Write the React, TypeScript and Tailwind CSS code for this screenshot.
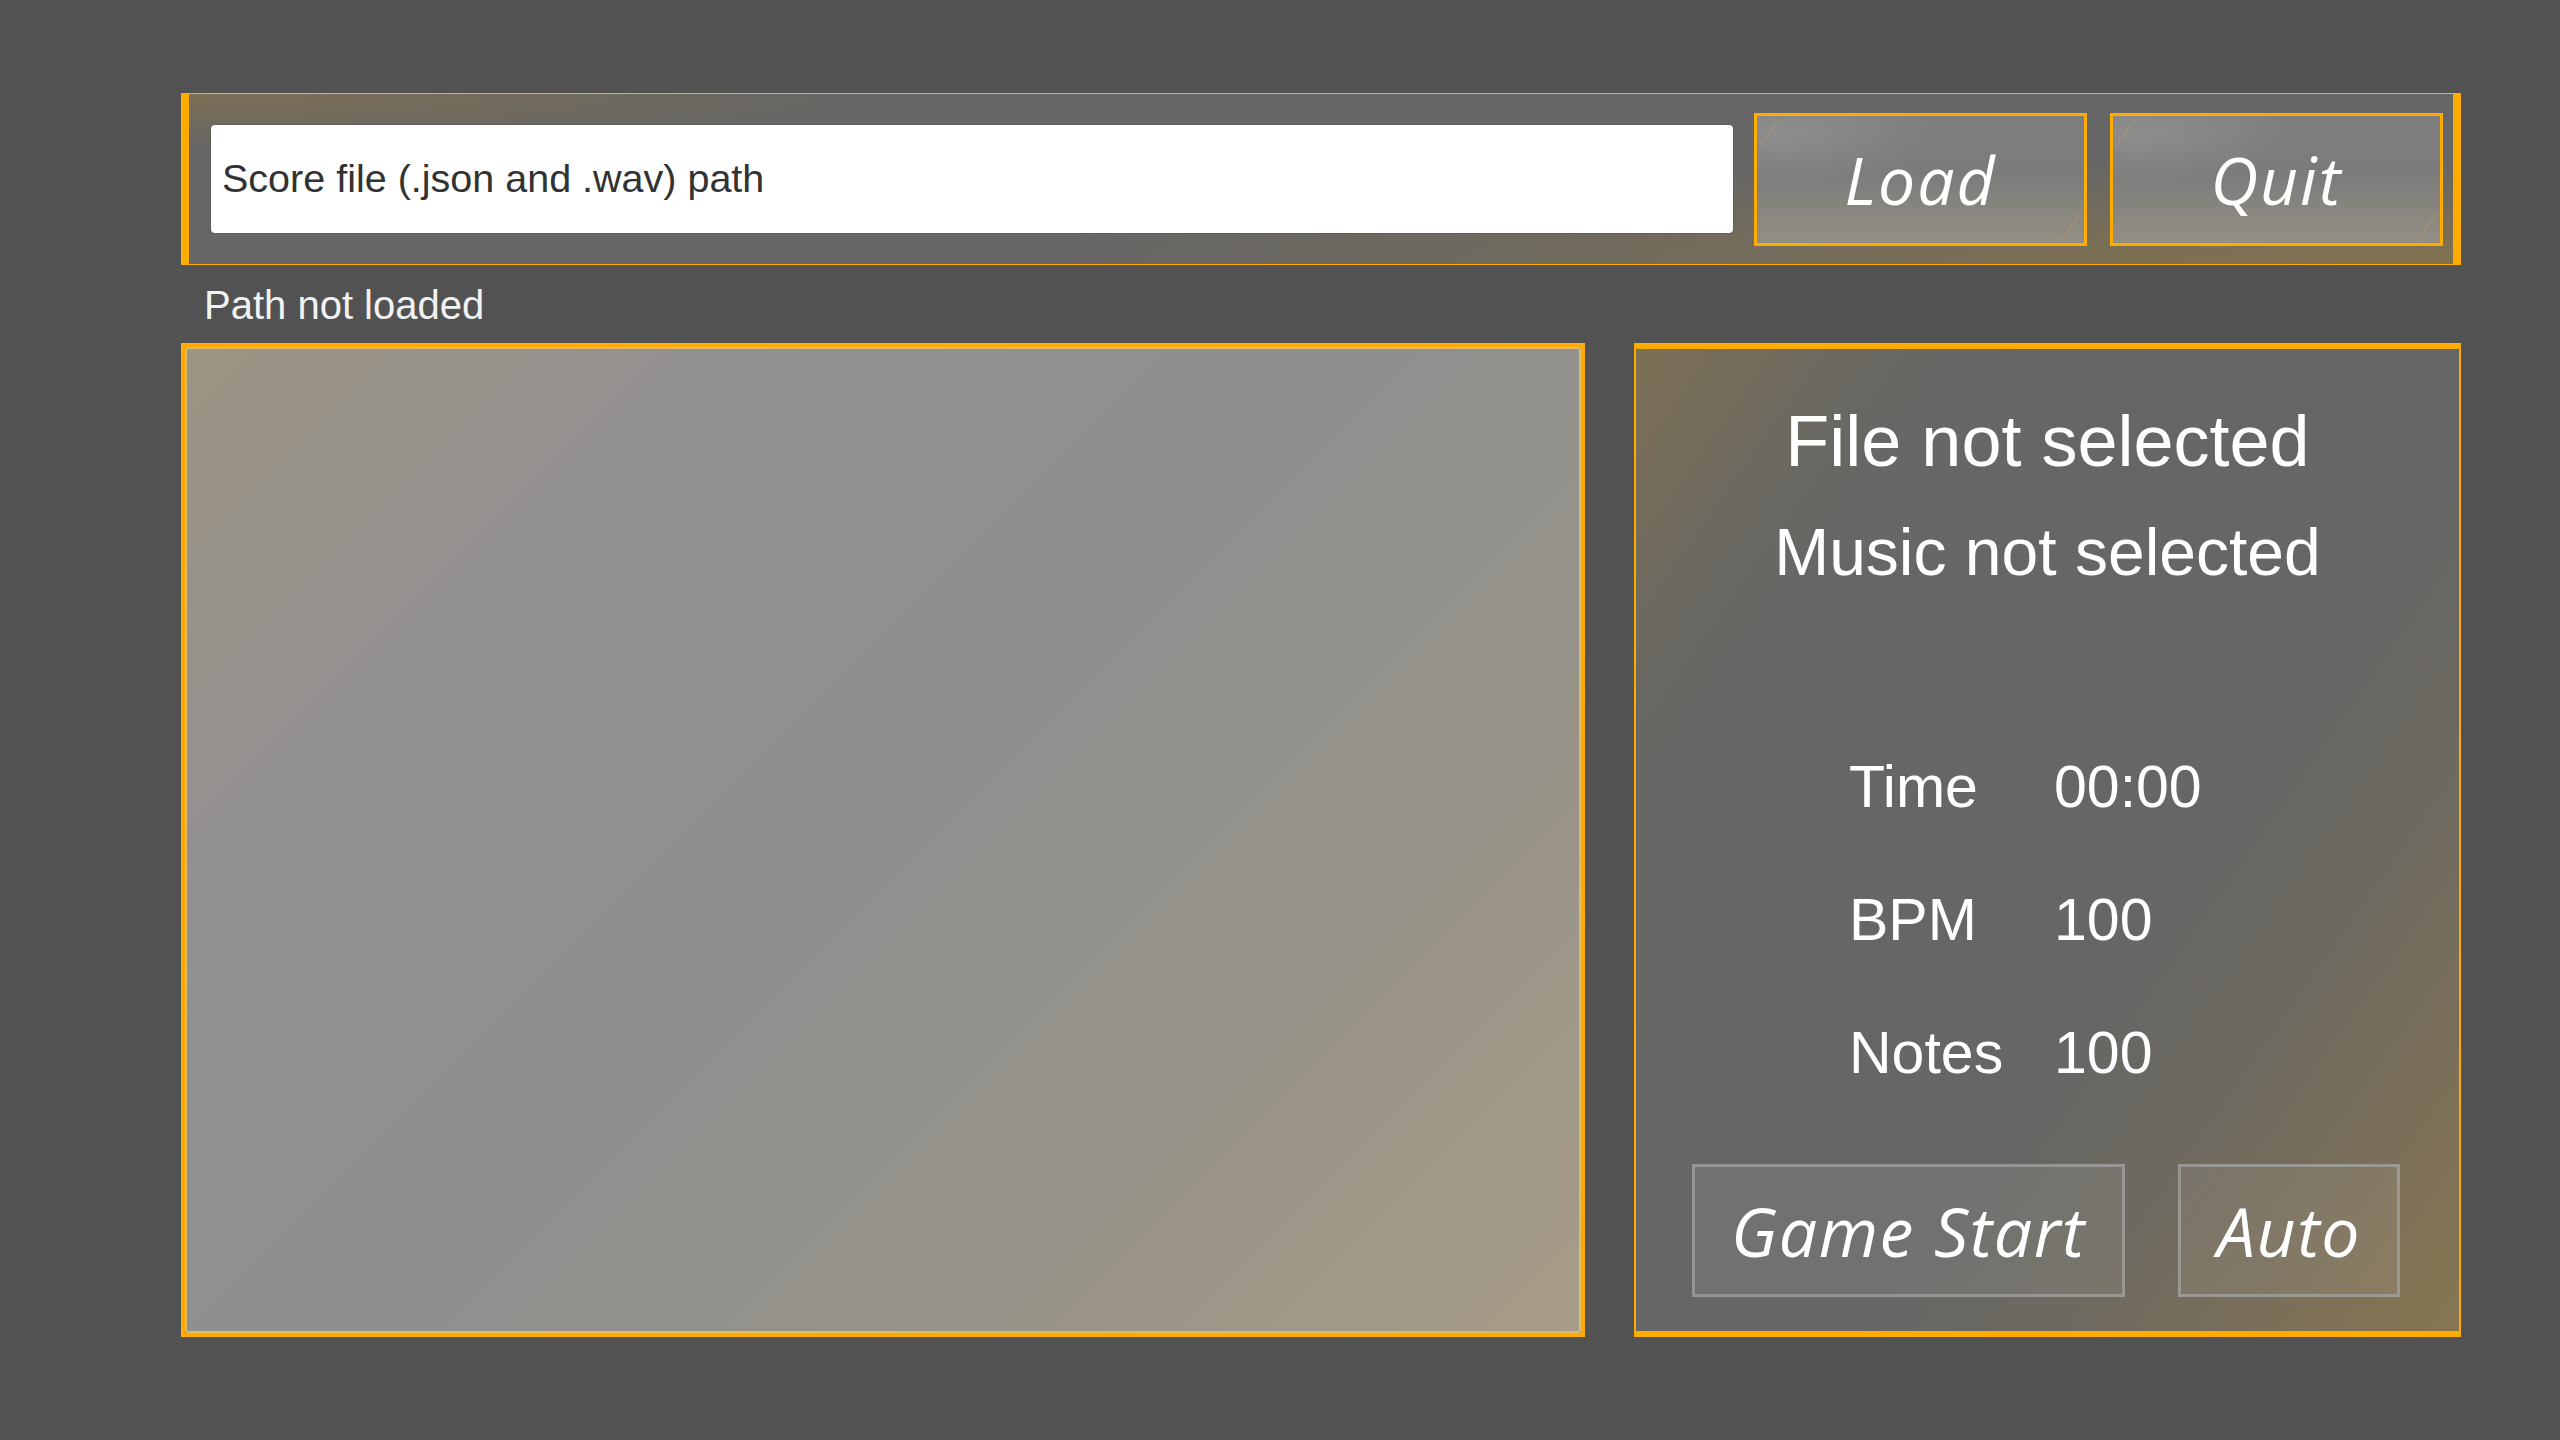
import React from 'react';

const sans = { fontFamily: '"Liberation Sans", Arial, sans-serif' };

function CornerLines() {
  return (
    <svg className="pointer-events-none absolute inset-0 h-full w-full" preserveAspectRatio="none" viewBox="0 0 100 100">
      <line x1="1" y1="24" x2="7" y2="1" stroke="#d9a23c" strokeOpacity="0.55" strokeWidth="0.9" vectorEffect="non-scaling-stroke" />
      <line x1="93" y1="99" x2="99" y2="76" stroke="#d9a23c" strokeOpacity="0.55" strokeWidth="0.9" vectorEffect="non-scaling-stroke" />
    </svg>
  );
}

function TopButton({ label }: { label: string }) {
  return (
    <button className="relative flex h-[133px] w-[333px] items-center justify-center border-[3px] border-[#ffab00] bg-[#7d7d7d] bg-[radial-gradient(ellipse_at_8%_15%,rgba(255,255,255,0.12),transparent_35%),linear-gradient(180deg,#7f7f7f_0%,#7b7b7b_45%,#948f83_100%)]">
      <CornerLines />
      <span className="font-['Open_Sans',sans-serif] text-[66px] italic leading-none tracking-[2px] text-white">{label}</span>
    </button>
  );
}

function StatRow({ label, value }: { label: string; value: string }) {
  return (
    <div className="flex h-[59px] items-center text-[59px] leading-none text-white" style={sans}>
      <span className="w-[205px] pl-[213px] box-content">{label}</span>
      <span>{value}</span>
    </div>
  );
}

export default function App() {
  return (
    <div className="min-h-[1440px] w-full bg-[#525252] pl-[181px] pt-[93px]">
      <div className="w-[2280px]">
        {/* file path bar */}
        <div className="flex h-[172px] items-center border-x-8 border-y border-[#ffab00] bg-[#666666] bg-[radial-gradient(ellipse_at_top_left,#7c6f55,transparent_22%),radial-gradient(ellipse_at_bottom_right,#82724f,transparent_45%)] pl-[22px] pr-[10px]">
          <div className="flex h-[108px] w-[1523px] items-center rounded-[4px] bg-white pl-[11px] shadow-[0_0_0_1px_rgba(0,0,0,0.08)]">
            <span className="text-[39.5px] leading-none text-[#323232]" style={sans}>Score file (.json and .wav) path</span>
          </div>
          <div className="ml-[21px]">
            <TopButton label="Load" />
          </div>
          <div className="ml-[23px]">
            <TopButton label="Quit" />
          </div>
        </div>

        <div className="mt-[20px] h-[40px] pl-[23px] text-[40px] leading-none text-[#f2f2f2]" style={sans}>
          Path not loaded
        </div>

        <div className="mt-[18px] flex h-[994px] gap-[49px]">
          {/* score list */}
          <div className="w-[1404px] border-[4px] border-[#ffab00] bg-[#8f8f8f]">
            <div className="h-full w-full rounded-[3px] border-[2px] border-[#f4c462]/80 bg-[linear-gradient(135deg,#9d9584_0%,#929090_22%,#8f8f8f_50%,#959289_70%,#a79c87_100%)]" />
          </div>

          {/* score info */}
          <div className="flex w-[827px] flex-col border-x-2 border-y-[6px] border-[#ffab00] bg-[#666666] bg-[linear-gradient(125deg,#7d7055_0%,#686764_18%,#666666_35%,#666666_60%,#6f6a5f_75%,#877551_100%)]">
            <div className="mt-[56px] text-center text-[72px] leading-none text-white" style={sans}>File not selected</div>
            <div className="mt-[42px] text-center text-[66px] leading-none text-white" style={sans}>Music not selected</div>
            <div className="mt-[173px] flex flex-col gap-[74px]">
              <StatRow label="Time" value="00:00" />
              <StatRow label="BPM" value="100" />
              <StatRow label="Notes" value="100" />
            </div>
            <div className="mt-[81px] flex pl-[56px]">
              <button className="flex h-[133px] w-[433px] items-center justify-center border-[3px] border-[#a5a5a5]/70 bg-white/[0.07]">
                <span className="font-['Open_Sans',sans-serif] text-[68px] italic leading-none tracking-[1.5px] text-white">Game Start</span>
              </button>
              <button className="ml-[53px] flex h-[133px] w-[222px] items-center justify-center border-[3px] border-[#a5a5a5]/70 bg-white/[0.07]">
                <span className="font-['Open_Sans',sans-serif] text-[68px] italic leading-none tracking-[1.5px] text-white">Auto</span>
              </button>
            </div>
          </div>
        </div>
      </div>
    </div>
  );
}
